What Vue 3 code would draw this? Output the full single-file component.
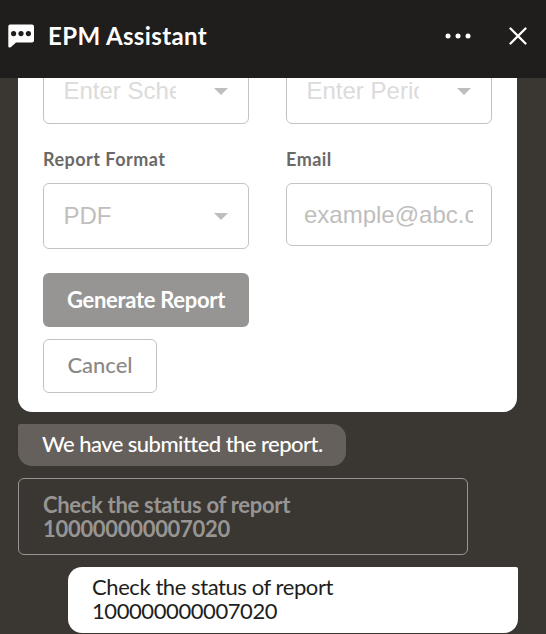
<script setup>
import { ref } from "vue";

const filters = ref([
  { id: "schedule", value: "Enter Schedule" },
  { id: "period", value: "Enter Period" },
]);
const format = ref("PDF");
const reportId = "100000000007020";
</script>

<template>
  <div class="chat">
    <header class="header">
      <svg class="logo" width="26" height="24" viewBox="0 0 26 24">
        <path
          d="M2 0.5H24Q26 0.5 26 2.5V16.5Q26 18.5 24 18.5H8L3 23Q0.3 24.4 0.3 22V2.5Q0.3 0.5 2 0.5Z"
          fill="#fff"
        />
        <circle cx="5.6" cy="9.6" r="2.6" fill="#201e1c" />
        <circle cx="13" cy="9.6" r="2.6" fill="#201e1c" />
        <circle cx="20.4" cy="9.6" r="2.6" fill="#201e1c" />
      </svg>
      <h1 class="title">EPM Assistant</h1>
      <button class="icon-btn more" aria-label="More options">
        <svg width="26" height="6" viewBox="0 0 26 6" fill="#fff">
          <circle cx="3" cy="3" r="2.5" />
          <circle cx="13" cy="3" r="2.5" />
          <circle cx="23" cy="3" r="2.5" />
        </svg>
      </button>
      <button class="icon-btn" aria-label="Close">
        <svg width="18" height="18" viewBox="0 0 18 18">
          <path
            d="M1.5 1.5L16.5 16.5M16.5 1.5L1.5 16.5"
            stroke="#fff"
            stroke-width="2.3"
            stroke-linecap="round"
          />
        </svg>
      </button>
    </header>

    <main class="messages">
      <section class="card">
        <div class="row first">
          <div v-for="f in filters" :key="f.id" class="select faded">
            <span class="value">{{ f.value }}</span>
            <span class="arrow"></span>
          </div>
        </div>
        <div class="row">
          <div class="field">
            <label class="label">Report Format</label>
            <div class="select">
              <span class="value">{{ format }}</span>
              <span class="arrow"></span>
            </div>
          </div>
          <div class="field">
            <label class="label">Email</label>
            <div class="select email">
              <span class="value">example@abc.com</span>
            </div>
          </div>
        </div>
        <div class="actions">
          <button class="btn primary">Generate Report</button>
          <button class="btn cancel">Cancel</button>
        </div>
      </section>

      <div class="bubble bot">We have submitted the report.</div>

      <button class="suggestion">
        Check the status of report<br />{{ reportId }}
      </button>

      <div class="bubble user">
        Check the status of report<br />{{ reportId }}
      </div>
    </main>
  </div>
</template>

<style>
body {
  margin: 0;
  background: #3a3631;
}
</style>

<style scoped>
.chat {
  height: 634px;
  overflow: hidden;
  display: flex;
  flex-direction: column;
  background: #3a3631;
  font-family: Lato, "Noto Sans", sans-serif;
  font-size: 22px;
  line-height: 24px;
}
.chat * {
  box-sizing: border-box;
}
.header {
  height: 78px;
  flex: none;
  display: flex;
  align-items: center;
  padding: 0 19px 6px 8px;
  background: #201e1c;
}
.title {
  flex: 1;
  margin: 0 0 0 14px;
  color: #fff;
  font-size: 24px;
  font-weight: 700;
  letter-spacing: 0.38px;
  white-space: nowrap;
}
.icon-btn {
  display: flex;
  padding: 0;
  border: none;
  background: none;
  cursor: pointer;
}
.more {
  margin-right: 38px;
}
.messages {
  flex: 1;
  min-height: 0;
  overflow: hidden;
  padding: 0 28px 0 18px;
  display: flex;
  flex-direction: column;
  align-items: flex-start;
  gap: 12px;
}
.card {
  flex: none;
  width: 499px;
  height: 334px;
  padding: 0 25px;
  background: #fff;
  border-radius: 0 0 14px 14px;
}
.row {
  display: grid;
  grid-template-columns: 206px 206px;
  column-gap: 37px;
}
/* upper row is scrolled partly under the header */
.first {
  margin-top: -20px;
}
.label {
  display: block;
  margin-top: 23px;
  height: 36px;
  color: #6b6967;
  font-size: 18px;
  font-weight: 700;
  letter-spacing: 0.48px;
  white-space: nowrap;
}
.select {
  height: 66px;
  display: flex;
  align-items: center;
  justify-content: space-between;
  padding: 0 20px 0 19.5px;
  border: 1px solid #c4c3c2;
  border-radius: 6px;
  color: #bfbebd;
  font-family: "Liberation Sans", Arial, sans-serif;
  font-size: 24px;
}
.faded .value {
  color: #dcdbdb;
}
.value {
  width: 112px;
  overflow: hidden;
  white-space: nowrap;
}
.email {
  height: 63px;
  padding: 0 18px 0 17px;
}
.email .value {
  width: 169px;
}
.arrow {
  border: 7.5px solid transparent;
  border-top-color: #bfbebd;
  border-bottom: 0;
}
.actions {
  display: flex;
  flex-direction: column;
  align-items: flex-start;
  gap: 12px;
  margin-top: 24px;
}
.btn {
  height: 54px;
  padding: 0;
  border-radius: 6px;
  font-family: inherit;
  font-size: 22px;
  line-height: 24px;
  white-space: nowrap;
}
.primary {
  width: 206px;
  border: none;
  background: #979593;
  color: #fff;
  font-weight: 700;
  letter-spacing: -0.3px;
}
.cancel {
  width: 114px;
  padding-bottom: 2px;
  border: 1px solid #c4c3c2;
  background: #fff;
  color: #8b8987;
  font-weight: 500;
}
.bubble {
  flex: none;
  white-space: nowrap;
}
.bot {
  width: 328px;
  height: 42px;
  padding: 8px 24px;
  border-radius: 2px 14px 14px 14px;
  background: #65605b;
  color: #fff;
  font-weight: 500;
  letter-spacing: -0.54px;
}
.suggestion {
  flex: none;
  width: 450px;
  height: 77px;
  padding: 0 24px;
  border: 1px solid #979593;
  border-radius: 6px;
  background: none;
  color: #979593;
  font-family: inherit;
  font-size: 22px;
  font-weight: 700;
  line-height: 24px;
  letter-spacing: -0.3px;
  text-align: left;
}
.user {
  align-self: flex-end;
  width: 450px;
  height: 66px;
  padding: 8px 24px;
  border-radius: 14px 2px 14px 14px;
  background: #fff;
  color: #201e1c;
  letter-spacing: -0.42px;
}
</style>
